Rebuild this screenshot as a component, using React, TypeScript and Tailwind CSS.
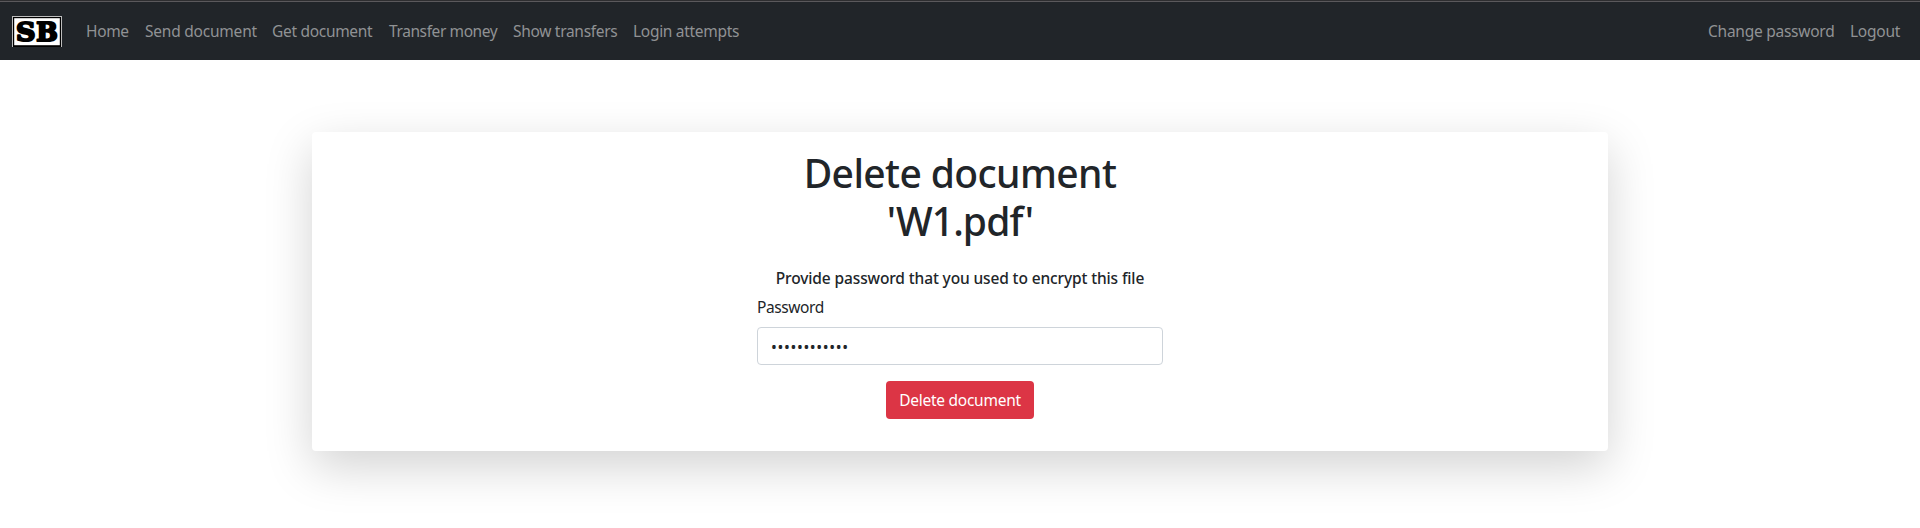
const mainLinks = [
  { label: 'Home', cls: 'w-[43px] tracking-[-0.35px]' },
  { label: 'Send document', cls: 'w-[111px] tracking-[-0.22px]' },
  { label: 'Get document', cls: 'w-[101px] tracking-[-0.3px]' },
  { label: 'Transfer money', cls: 'w-[108px] tracking-[-0.4px]' },
  { label: 'Show transfers', cls: 'w-[104px] tracking-[-0.3px]' },
  { label: 'Login attempts', cls: 'w-[106px] tracking-[-0.3px]' },
];

const userLinks = [
  { label: 'Change password', cls: 'w-[126px] tracking-[-0.25px]' },
  { label: 'Logout', cls: 'w-[50px] tracking-[-0.25px]' },
];

function Logo() {
  return (
    <svg width="50" height="31" viewBox="0 0 50 31" className="overflow-visible" aria-label="SB">
      <path d="M0 0H50V31H49V1H1V31H0Z" fill="#bdbdbd" />
      <rect x="1" y="1" width="48" height="30" fill="#000" />
      <rect x="2.2" y="2.2" width="45.6" height="27" fill="#fff" />
      <g
        transform="translate(0 25.2) scale(1 1.12)"
        fontFamily="DejaVu Serif, serif"
        fontWeight="700"
        fontSize="23"
        stroke="#000"
        strokeWidth="1.9"
        strokeLinejoin="round"
      >
        <text x="4" textLength="19.5" lengthAdjust="spacingAndGlyphs">
          S
        </text>
        <text x="24.2" textLength="21.5" lengthAdjust="spacingAndGlyphs">
          B
        </text>
      </g>
    </svg>
  );
}

function NavLinks({ links }: { links: { label: string; cls: string }[] }) {
  return (
    <ul className="flex gap-4">
      {links.map((l) => (
        <li key={l.label} className={`whitespace-nowrap ${l.cls}`}>
          <a href="#">{l.label}</a>
        </li>
      ))}
    </ul>
  );
}

export default function App() {
  return (
    <div className="h-[528px] overflow-hidden bg-white font-['Noto_Sans',sans-serif] text-[15.5px] leading-6 text-[#212529]">
      <nav className="flex h-[60px] items-start border-t border-[#2e2e30] bg-[#212529] text-[#909294]">
        <div className="flex h-[59px] w-full items-start border-t border-[#5b595c] pt-[14px] pr-5 pl-3">
          <Logo />
          <div className="ml-6 flex grow justify-between pt-[3px]">
            <NavLinks links={mainLinks} />
            <NavLinks links={userLinks} />
          </div>
        </div>
      </nav>

      <main className="mx-auto mt-[72px] flex h-[319px] w-[1296px] flex-col items-center rounded bg-white pt-[17px] shadow-[0_16px_48px_rgba(0,0,0,0.175)]">
        <h1 className="text-center text-[39px] leading-[48px] font-medium tracking-[-0.6px]">
          Delete document
          <br />
          <span className="tracking-[-0.9px]">&apos;W1.pdf&apos;</span>
        </h1>
        <form className="flex w-[406px] flex-col items-center pt-6" onSubmit={(e) => e.preventDefault()}>
          <h2 className="text-[15.5px] leading-[19px] font-medium tracking-[-0.13px] whitespace-nowrap">
            Provide password that you used to encrypt this file
          </h2>
          <label htmlFor="password" className="mt-[7px] w-full tracking-[-0.4px]">
            Password
          </label>
          <div className="mt-2 flex h-[38px] w-full items-center rounded border border-[#ced4da] px-[13px] pt-0.5">
            <input
              id="password"
              type="password"
              defaultValue="aaaaaaaaaaaa"
              className="w-full tracking-[0.65px] outline-none"
            />
          </div>
          <button className="mt-4 h-[38px] w-[148px] rounded bg-[#dc3545] tracking-[-0.26px] whitespace-nowrap text-white">
            Delete document
          </button>
        </form>
      </main>
    </div>
  );
}
